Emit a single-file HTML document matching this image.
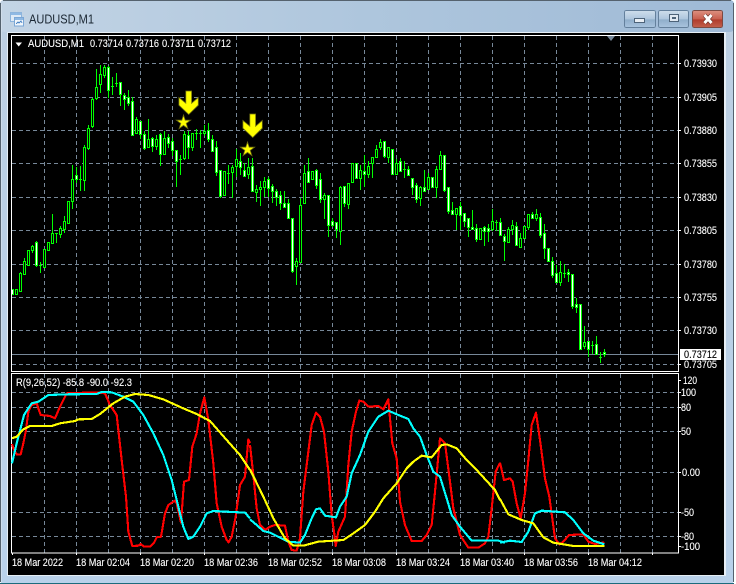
<!DOCTYPE html>
<html><head><meta charset="utf-8"><title>AUDUSD,M1</title>
<style>
html,body{margin:0;padding:0;background:#fff;width:736px;height:584px;overflow:hidden}
svg{display:block}
text{font-family:"Liberation Sans",sans-serif;font-size:10.6px;fill:#fff;stroke:#fff;stroke-width:.12}
</style></head><body>
<svg width="736" height="584" viewBox="0 0 736 584" xmlns="http://www.w3.org/2000/svg">
<defs>
<linearGradient id="tb" x1="0" y1="0" x2="1" y2="0"><stop offset="0" stop-color="#c3d4e5"/><stop offset=".5" stop-color="#aec6dd"/><stop offset="1" stop-color="#9fbad6"/></linearGradient>
<linearGradient id="side" x1="0" y1="0" x2="0" y2="1"><stop offset="0" stop-color="#bccfe2"/><stop offset="1" stop-color="#b9d1ea"/></linearGradient>
<linearGradient id="btn" x1="0" y1="0" x2="0" y2="1"><stop offset="0" stop-color="#cfdeec"/><stop offset=".5" stop-color="#aec6dd"/><stop offset=".55" stop-color="#90aecb"/><stop offset="1" stop-color="#a9c4de"/></linearGradient>
<linearGradient id="cl" x1="0" y1="0" x2="0" y2="1"><stop offset="0" stop-color="#dd9181"/><stop offset=".5" stop-color="#c9604f"/><stop offset=".55" stop-color="#b03c2c"/><stop offset="1" stop-color="#c2604c"/></linearGradient>
</defs>
<rect width="736" height="584" fill="#fff"/>
<rect x="0" y="0" width="734" height="584" rx="4" fill="url(#side)"/>
<rect x="0" y="0" width="734" height="32" rx="4" fill="url(#tb)"/>
<path d="M3 .5H731M.5 3V582M733.5 3V582" stroke="#55626e" fill="none"/>
<path d="M0 583.5H734" stroke="#1c6b7c"/>
<path d="M1.5 4V582" stroke="#dbe6f0" opacity=".6"/>

<!-- title icon -->
<g shape-rendering="crispEdges">
<rect x="10.5" y="12.5" width="11" height="9" fill="#dfeaf6" stroke="#8db4dc"/>
<rect x="11" y="13" width="10" height="2" fill="#8fb9e4"/>
<rect x="14.5" y="17.5" width="9" height="8.5" fill="#f2f7fc" stroke="#7ba7d6"/>
<rect x="15" y="18" width="8" height="2" fill="#8fb9e4"/>
<path d="M16 24l2-2 1 1 2-2 1 2" fill="none" stroke="#4f88c6"/>
</g>
<text x="29" y="23.5" textLength="65" lengthAdjust="spacingAndGlyphs" style="font-size:12.5px;fill:#1b2733;stroke:none">AUDUSD,M1</text>

<!-- window buttons -->
<g shape-rendering="crispEdges">
<rect x="624.5" y="10.5" width="31" height="17" rx="2" fill="url(#btn)" stroke="#64809c"/>
<rect x="658.5" y="10.5" width="30" height="17" rx="2" fill="url(#btn)" stroke="#64809c"/>
<rect x="692.5" y="10.5" width="30" height="17" rx="2" fill="url(#cl)" stroke="#7c4a42"/>
<rect x="634.5" y="18.5" width="10" height="4" fill="#e8eef4" stroke="#4d6379"/>
<rect x="669.5" y="14.5" width="9" height="7" fill="#dfe8f1" stroke="#4d6379"/>
<rect x="672.5" y="17.5" width="3" height="1" fill="#7e96ae" stroke="#4d6379"/>
</g>
<path d="M704.5 15l7 8M711.5 15l-7 8" stroke="#5f2a22" stroke-width="4.2"/>
<path d="M704.5 15l7 8M711.5 15l-7 8" stroke="#fff" stroke-width="3"/>

<!-- client -->
<rect x="7" y="32" width="719" height="544" fill="#e6eef5"/>
<rect x="8" y="33" width="716" height="542" fill="#000"/>

<!-- grid -->
<path stroke="#778899" fill="none" stroke-dasharray="4 3" shape-rendering="crispEdges" d="M12 63.5H679M12 97.5H679M12 130.5H679M12 163.5H679M12 197.5H679M12 230.5H679M12 264.5H679M12 297.5H679M12 330.5H679M12 364.5H679M12 392.5H679M12 407.5H679M12 431.5H679M12 472.5H679M12 512.5H679M12 536.5H679M44.5 36V371M76.5 36V371M108.5 36V371M140.5 36V371M172.5 36V371M204.5 36V371M236.5 36V371M268.5 36V371M300.5 36V371M332.5 36V371M364.5 36V371M396.5 36V371M428.5 36V371M460.5 36V371M492.5 36V371M524.5 36V371M556.5 36V371M588.5 36V371M620.5 36V371M652.5 36V371M44.5 374V553M76.5 374V553M108.5 374V553M140.5 374V553M172.5 374V553M204.5 374V553M236.5 374V553M268.5 374V553M300.5 374V553M332.5 374V553M364.5 374V553M396.5 374V553M428.5 374V553M460.5 374V553M492.5 374V553M524.5 374V553M556.5 374V553M588.5 374V553M620.5 374V553M652.5 374V553"/>
<path d="M12 354.5H679" stroke="#778899"/>

<!-- candles -->
<g shape-rendering="crispEdges">
<path stroke="#0f0" fill="none" d="M20.5 272V292M24.5 258V274M28.5 250V265M32.5 245V253M36.5 241V267M40.5 262V273M44.5 249V267M48.5 242V250M52.5 214V243M56.5 233V243M60.5 226V238M64.5 216V233M68.5 201V223M72.5 165V209M76.5 167V183M80.5 166V191M84.5 145V191M88.5 125V150M92.5 98V128M96.5 69V100M100.5 65V93M104.5 65V78M108.5 66V98M112.5 77V95M116.5 73V87M120.5 82V106M124.5 93V110M128.5 90V106M132.5 97V135M136.5 117V133M140.5 121V139M144.5 131V150M148.5 119V147M152.5 137V152M156.5 135V150M160.5 133V166M164.5 131V155M168.5 134V148M172.5 138V156M176.5 150V187M180.5 155V175M184.5 131V160M188.5 131V159M192.5 133V151M196.5 129V140M200.5 130V148M204.5 125V136M208.5 123V142M212.5 135V151M216.5 141V176M220.5 170V198M224.5 171V195M228.5 165V184M232.5 165V198M236.5 149V177M240.5 153V175M244.5 163V176M248.5 158V179M252.5 158V191M256.5 185V202M260.5 181V206M264.5 177V197M268.5 177V197M272.5 184V203M276.5 189V206M280.5 191V210M284.5 191V207M288.5 199V218M292.5 218V273M296.5 258V285M300.5 198V262M304.5 165V203M308.5 158V183M312.5 171V179M316.5 169V189M320.5 173V203M324.5 193V219M328.5 195V237M332.5 218V227M336.5 222V238M340.5 186V245M344.5 186V207M348.5 183V209M352.5 163V182M356.5 163V179M360.5 165V190M364.5 155V187M368.5 161V178M372.5 157V178M376.5 145V158M380.5 139V150M384.5 141V158M388.5 147V163M392.5 149V175M396.5 159V174M400.5 158V172M404.5 161V178M408.5 166V176M412.5 178V195M416.5 183V203M420.5 186V206M424.5 170V191M428.5 173V189M432.5 177V187M436.5 166V198M440.5 151V169M444.5 155V192M448.5 187V214M452.5 202V215M456.5 208V230M460.5 202V230M464.5 213V227M468.5 218V237M472.5 210V230M476.5 224V242M480.5 228V239M484.5 226V246M488.5 224V242M492.5 209V231M496.5 220V231M500.5 218V235M504.5 234V261M508.5 227V242M512.5 220V235M516.5 222V245M520.5 233V247M524.5 226V238M528.5 214V230M532.5 212V218M536.5 209V221M540.5 213V238M544.5 224V259M548.5 248V261M552.5 257V278M556.5 265V282M560.5 261V286M564.5 264V278M568.5 269V282M572.5 274V309M576.5 298V313M580.5 304V349M584.5 326V349M588.5 341V357M592.5 341V354M596.5 336V354M600.5 352V363M604.5 349V357
M39 265.5h3M55 233.5h3M79 179.5h3M111 86.5h3M115 83.5h3M179 159.5h3M195 133.5h3M199 133.5h3M227 173.5h3M403 169.5h3M495 222.5h3M563 273.5h3M591 345.5h3M599 357.5h3"/>
<path stroke="#0f0" fill="#000" d="M15.5 289.5h2V294.5h-2zM19.5 273.5h2V291.5h-2zM23.5 261.5h2V274.5h-2zM27.5 250.5h2V265.5h-2zM31.5 246.5h2V250.5h-2zM43.5 249.5h2V267.5h-2zM47.5 242.5h2V250.5h-2zM51.5 233.5h2V243.5h-2zM59.5 228.5h2V234.5h-2zM63.5 221.5h2V229.5h-2zM67.5 201.5h2V223.5h-2zM71.5 179.5h2V201.5h-2zM83.5 147.5h2V180.5h-2zM87.5 128.5h2V148.5h-2zM91.5 99.5h2V126.5h-2zM95.5 87.5h2V98.5h-2zM99.5 74.5h2V84.5h-2zM103.5 67.5h2V75.5h-2zM135.5 119.5h2V133.5h-2zM147.5 139.5h2V147.5h-2zM155.5 139.5h2V146.5h-2zM163.5 138.5h2V154.5h-2zM183.5 134.5h2V158.5h-2zM191.5 133.5h2V147.5h-2zM203.5 131.5h2V133.5h-2zM223.5 171.5h2V195.5h-2zM231.5 167.5h2V172.5h-2zM235.5 159.5h2V166.5h-2zM247.5 167.5h2V174.5h-2zM255.5 189.5h2V192.5h-2zM259.5 187.5h2V189.5h-2zM263.5 181.5h2V187.5h-2zM295.5 261.5h2V266.5h-2zM299.5 205.5h2V262.5h-2zM303.5 173.5h2V203.5h-2zM311.5 171.5h2V179.5h-2zM323.5 195.5h2V199.5h-2zM339.5 187.5h2V231.5h-2zM347.5 183.5h2V204.5h-2zM351.5 163.5h2V182.5h-2zM359.5 170.5h2V178.5h-2zM367.5 166.5h2V174.5h-2zM371.5 157.5h2V163.5h-2zM375.5 149.5h2V157.5h-2zM379.5 142.5h2V147.5h-2zM387.5 147.5h2V157.5h-2zM395.5 163.5h2V174.5h-2zM419.5 187.5h2V198.5h-2zM427.5 177.5h2V189.5h-2zM435.5 169.5h2V187.5h-2zM439.5 155.5h2V169.5h-2zM455.5 208.5h2V214.5h-2zM479.5 228.5h2V239.5h-2zM491.5 221.5h2V229.5h-2zM507.5 229.5h2V242.5h-2zM511.5 225.5h2V229.5h-2zM519.5 238.5h2V247.5h-2zM523.5 226.5h2V238.5h-2zM527.5 214.5h2V227.5h-2zM535.5 214.5h2V218.5h-2zM559.5 272.5h2V282.5h-2zM583.5 342.5h2V346.5h-2z"/>
<path stroke="#0f0" fill="#fff" d="M11.5 289.5h2V294.5h-2zM35.5 242.5h2V265.5h-2zM75.5 175.5h2V179.5h-2zM107.5 67.5h2V90.5h-2zM119.5 82.5h2V94.5h-2zM123.5 95.5h2V99.5h-2zM127.5 97.5h2V103.5h-2zM131.5 101.5h2V135.5h-2zM139.5 121.5h2V134.5h-2zM143.5 134.5h2V148.5h-2zM151.5 138.5h2V146.5h-2zM159.5 134.5h2V154.5h-2zM167.5 137.5h2V143.5h-2zM171.5 141.5h2V150.5h-2zM175.5 150.5h2V161.5h-2zM187.5 135.5h2V147.5h-2zM207.5 130.5h2V139.5h-2zM211.5 139.5h2V151.5h-2zM215.5 147.5h2V172.5h-2zM219.5 170.5h2V196.5h-2zM239.5 161.5h2V167.5h-2zM243.5 170.5h2V176.5h-2zM251.5 166.5h2V191.5h-2zM267.5 179.5h2V188.5h-2zM271.5 186.5h2V191.5h-2zM275.5 191.5h2V197.5h-2zM279.5 195.5h2V203.5h-2zM283.5 203.5h2V207.5h-2zM287.5 203.5h2V218.5h-2zM291.5 218.5h2V271.5h-2zM307.5 171.5h2V182.5h-2zM315.5 170.5h2V185.5h-2zM319.5 179.5h2V199.5h-2zM327.5 195.5h2V225.5h-2zM331.5 221.5h2V225.5h-2zM335.5 222.5h2V229.5h-2zM343.5 186.5h2V203.5h-2zM355.5 163.5h2V178.5h-2zM363.5 171.5h2V174.5h-2zM383.5 141.5h2V156.5h-2zM391.5 149.5h2V174.5h-2zM399.5 161.5h2V171.5h-2zM407.5 169.5h2V175.5h-2zM411.5 178.5h2V187.5h-2zM415.5 185.5h2V199.5h-2zM423.5 187.5h2V191.5h-2zM431.5 177.5h2V187.5h-2zM443.5 155.5h2V190.5h-2zM447.5 187.5h2V211.5h-2zM451.5 210.5h2V214.5h-2zM459.5 206.5h2V215.5h-2zM463.5 213.5h2V221.5h-2zM467.5 218.5h2V227.5h-2zM471.5 227.5h2V229.5h-2zM475.5 228.5h2V239.5h-2zM483.5 227.5h2V231.5h-2zM487.5 228.5h2V231.5h-2zM499.5 222.5h2V235.5h-2zM503.5 236.5h2V241.5h-2zM515.5 226.5h2V245.5h-2zM531.5 214.5h2V218.5h-2zM539.5 217.5h2V235.5h-2zM543.5 233.5h2V248.5h-2zM547.5 248.5h2V261.5h-2zM551.5 261.5h2V275.5h-2zM555.5 273.5h2V282.5h-2zM567.5 272.5h2V274.5h-2zM571.5 274.5h2V306.5h-2zM575.5 304.5h2V307.5h-2zM579.5 304.5h2V349.5h-2zM587.5 341.5h2V349.5h-2zM595.5 344.5h2V354.5h-2zM603.5 352.5h2V354.5h-2z"/>
</g>

<!-- arrows and stars -->
<g fill="#ff0" stroke="#6f6f10" stroke-width=".8">
<path d="M185.8 91H191.6V103.2L198.3 97.5V105.2L188.7 114.5L178.9 105.2V97.5L185.8 103.2Z"/>
<path d="M249.8 114H255.6V126.2L262.3 120.5V128.2L252.7 137.5L242.9 128.2V120.5L249.8 126.2Z"/>
<path d="M183.5 115L185.2 120.2H190.6L186.2 123.4L187.9 128.6L183.5 125.4L179.1 128.6L180.8 123.4L176.4 120.2H181.8Z"/>
<path d="M247.5 142L249.2 147.2H254.6L250.2 150.4L251.9 155.6L247.5 152.4L243.1 155.6L244.8 150.4L240.4 147.2H245.8Z"/>
</g>

<!-- chart frame -->
<g shape-rendering="crispEdges" fill="none" stroke="#fff">
<rect x="11.5" y="35.5" width="667" height="336"/>
<rect x="11.5" y="373.5" width="667" height="179.5"/>
<path d="M679 63.5h2M679 97.5h2M679 130.5h2M679 163.5h2M679 197.5h2M679 230.5h2M679 264.5h2M679 297.5h2M679 330.5h2M679 364.5h2M679 380.5h2M679 392.5h2M679 407.5h2M679 431.5h2M679 472.5h2M679 512.5h2M679 536.5h2M679 546.5h2M12.5 553v2M76.5 553v2M140.5 553v2M204.5 553v2M268.5 553v2M332.5 553v2M396.5 553v2M460.5 553v2M524.5 553v2M588.5 553v2M652.5 553v2"/>
</g>
<path d="M607 36H615L611 41Z" fill="#778899"/>
<path d="M15.5 42.5H22L18.7 46.5Z" fill="#fff"/>

<!-- indicator lines -->
<g fill="none" stroke-width="6.4" stroke-linejoin="round" shape-rendering="crispEdges">
<g transform="translate(0 340) scale(.33333)">
<polyline stroke="#f00" points="36,312 40,325 50,343 62,343 70,310 78,270 85,215 95,195 110,190 122,225 150,228 165,235 180,200 200,160 290,157 315,160 330,195 350,225 355,270 365,360 378,470 385,575 397,618 415,617 422,612 432,620 450,620 462,608 470,592 483,590 495,520 505,495 525,482 530,490 543,548 552,425 567,420 577,320 590,280 600,220 613,172 625,240 640,370 650,490 665,560 680,600 686,607 695,590 707,530 720,435 735,410 745,298 750,310"/>
</g>
<g transform="translate(250 375) scale(.33333)">
<polyline stroke="#f00" points="0,210 10,300 20,400 30,450 45,465 60,455 75,450 105,452 115,500 125,525 140,527 150,490 160,350 170,270 185,150 198,113 210,125 222,170 235,290 245,420 252,470 257,513 265,470 285,425 295,270 305,170 318,110 328,77 340,80 355,95 385,93 400,103 415,73 420,130 427,205 440,250 450,380 465,450 485,498 515,498 530,480 545,450 555,350 570,190 585,205 600,320 610,400 630,480 655,518 685,518 705,505 715,485 725,400 737,290 750,263"/>
</g>
<g transform="translate(500 300) scale(.33333)">
<polyline stroke="#f00" points="0,488 12,540 30,535 38,545 50,610 62,655 75,580 85,480 95,375 108,338 120,420 135,535 148,590 165,715 178,733 190,725 207,705 250,703 265,725 285,732 313,727"/>
</g>
<g transform="translate(0 340) scale(.33333)">
<polyline stroke="#0ff" points="36,370 50,310 72,225 95,190 115,185 145,165 200,163 290,162 305,156 335,157 370,170 400,185 430,225 460,280 490,345 515,420 530,480 550,560 565,597 580,590 600,560 620,520 640,513 735,518 750,535"/>
</g>
<g transform="translate(250 375) scale(.33333)">
<polyline stroke="#0ff" points="0,433 20,450 40,468 60,473 80,483 115,500 150,503 165,480 185,430 198,403 210,400 225,422 258,427 270,395 290,365 305,295 330,240 355,170 385,125 415,107 450,122 475,132 490,160 510,185 530,240 550,290 570,305 590,370 605,420 630,455 665,497 745,497 765,503"/>
</g>
<g transform="translate(500 300) scale(.33333)">
<polyline stroke="#0ff" points="0,728 30,722 65,726 85,695 105,640 125,632 195,637 220,660 250,700 280,722 313,733"/>
</g>
<g transform="translate(0 340) scale(.33333)">
<polyline stroke="#ff0" points="36,295 50,290 70,268 90,258 155,258 180,250 225,243 235,238 275,237 300,222 340,190 375,170 405,162 445,165 490,178 545,203 590,222 630,243 680,300 720,345 750,390"/>
</g>
<g transform="translate(250 375) scale(.33333)">
<polyline stroke="#ff0" points="0,283 40,365 70,430 105,490 130,512 160,512 205,500 280,495 310,475 345,450 375,410 400,370 440,325 470,280 490,260 515,242 545,247 575,210 590,208 620,220 650,255 680,285 735,345 750,375"/>
</g>
<g transform="translate(500 300) scale(.33333)">
<polyline stroke="#ff0" points="0,597 25,643 65,660 100,670 130,712 160,728 190,733 220,738 313,738"/>
</g>
</g>

<!-- header texts -->
<text x="28" y="47" textLength="56" lengthAdjust="spacingAndGlyphs">AUDUSD,M1</text>
<text x="90" y="47" textLength="33" lengthAdjust="spacingAndGlyphs">0.73714</text>
<text x="126" y="47" textLength="33" lengthAdjust="spacingAndGlyphs">0.73716</text>
<text x="162" y="47" textLength="33" lengthAdjust="spacingAndGlyphs">0.73711</text>
<text x="198" y="47" textLength="33" lengthAdjust="spacingAndGlyphs">0.73712</text>
<text x="16" y="386" textLength="116" lengthAdjust="spacingAndGlyphs">R(9,26,52) -85.8 -90.0 -92.3</text>

<!-- price axis -->
<g>
<text x="684" y="67" textLength="33" lengthAdjust="spacingAndGlyphs">0.73930</text>
<text x="684" y="101" textLength="33" lengthAdjust="spacingAndGlyphs">0.73905</text>
<text x="684" y="134" textLength="33" lengthAdjust="spacingAndGlyphs">0.73880</text>
<text x="684" y="167" textLength="33" lengthAdjust="spacingAndGlyphs">0.73855</text>
<text x="684" y="201" textLength="33" lengthAdjust="spacingAndGlyphs">0.73830</text>
<text x="684" y="234" textLength="33" lengthAdjust="spacingAndGlyphs">0.73805</text>
<text x="684" y="268" textLength="33" lengthAdjust="spacingAndGlyphs">0.73780</text>
<text x="684" y="301" textLength="33" lengthAdjust="spacingAndGlyphs">0.73755</text>
<text x="684" y="334" textLength="33" lengthAdjust="spacingAndGlyphs">0.73730</text>
<text x="684" y="368" textLength="33" lengthAdjust="spacingAndGlyphs">0.73705</text>
</g>
<rect x="680" y="349" width="41" height="11" fill="#fff"/>
<text x="684" y="358" textLength="33" lengthAdjust="spacingAndGlyphs" style="fill:#000;stroke:#000">0.73712</text>

<!-- indicator axis -->
<text x="683" y="384" textLength="14" lengthAdjust="spacingAndGlyphs">120</text>
<text x="681" y="396" textLength="15" lengthAdjust="spacingAndGlyphs">100</text>
<text x="681" y="411" textLength="10" lengthAdjust="spacingAndGlyphs">80</text>
<text x="681" y="435" textLength="10" lengthAdjust="spacingAndGlyphs">50</text>
<text x="682" y="476" textLength="18" lengthAdjust="spacingAndGlyphs">0.00</text>
<text x="681" y="516" textLength="13" lengthAdjust="spacingAndGlyphs">-50</text>
<text x="681" y="540" textLength="13" lengthAdjust="spacingAndGlyphs">-80</text>
<text x="681" y="550" textLength="19" lengthAdjust="spacingAndGlyphs">-100</text>

<!-- time axis -->
<text x="12" y="566" textLength="51" lengthAdjust="spacingAndGlyphs">18 Mar 2022</text>
<text x="76" y="566" textLength="54" lengthAdjust="spacingAndGlyphs">18 Mar 02:04</text>
<text x="140" y="566" textLength="54" lengthAdjust="spacingAndGlyphs">18 Mar 02:20</text>
<text x="204" y="566" textLength="54" lengthAdjust="spacingAndGlyphs">18 Mar 02:36</text>
<text x="268" y="566" textLength="54" lengthAdjust="spacingAndGlyphs">18 Mar 02:52</text>
<text x="332" y="566" textLength="54" lengthAdjust="spacingAndGlyphs">18 Mar 03:08</text>
<text x="396" y="566" textLength="54" lengthAdjust="spacingAndGlyphs">18 Mar 03:24</text>
<text x="460" y="566" textLength="54" lengthAdjust="spacingAndGlyphs">18 Mar 03:40</text>
<text x="524" y="566" textLength="54" lengthAdjust="spacingAndGlyphs">18 Mar 03:56</text>
<text x="588" y="566" textLength="54" lengthAdjust="spacingAndGlyphs">18 Mar 04:12</text>
</svg>
</body></html>
